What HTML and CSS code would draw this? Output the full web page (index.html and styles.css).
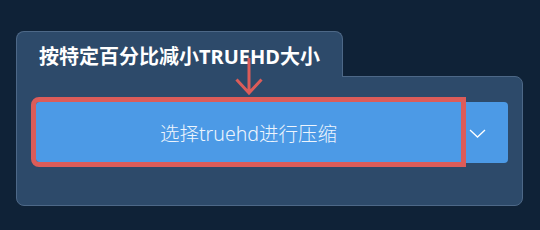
FILE: index.html
```html
<!DOCTYPE html>
<html lang="zh-CN">

<head>
    <meta charset="utf-8">
    <title>TRUEHD</title>
    <link rel="stylesheet" href="styles.css">
</head>

<body>
    <section class="panel">
        <div class="tab">
            <h2 class="title">按特定百分比减小TRUEHD大小</h2>
        </div>
        <div class="panel-body">
            <div class="split">
                <button type="button" class="split-main">选择truehd进行压缩</button>
                <button type="button" class="split-toggle">
                    <svg width="17" height="9" viewBox="0 0 17 9">
                        <path d="M1 1 L8.5 8 L16 1" fill="none" stroke="#fff" stroke-width="1.3"/>
                    </svg>
                </button>
            </div>
        </div>
        <!-- annotation arrow -->
        <svg class="arrow" width="28" height="37" viewBox="0 0 28 37">
            <path d="M14 0 V35 M1.5 21.5 L14 35 L26.5 21.5" fill="none" stroke="#dc5c59" stroke-width="3"/>
        </svg>
    </section>
</body>

</html>
```

FILE: styles.css
```css
html {
    background: #0f2237;
}

body {
    margin: 0;
    padding: 31px 0 0 16px;
    font-family: "Noto Sans", "Noto Sans CJK SC", sans-serif;
    color: #fff;
}

.panel {
    position: relative;
    width: 507px;
}

.tab {
    position: relative;
    z-index: 1;
    box-sizing: border-box;
    width: 327px;
    height: 46px;
    margin-bottom: -1px;
    padding: 12px 0 0 22px;
    background: #2d4a6a;
    border: 1px solid #4d6887;
    border-bottom: none;
    border-radius: 8px 8px 0 0;
}

.title {
    margin: 0;
    font-size: 20px;
    line-height: 26px;
    font-weight: 700;
    white-space: nowrap;
}

.panel-body {
    box-sizing: border-box;
    height: 130px;
    padding: 25px 0 0 19px;
    background: #2d4a6a;
    border: 1px solid #4d6887;
    border-radius: 0 8px 8px 8px;
}

.split {
    display: flex;
    height: 61px;
    width: 472px;
}

.split button {
    border: none;
    margin: 0;
    padding: 0;
    background: #4c9ae6;
    color: #eef5fd;
    font-family: inherit;
    cursor: pointer;
}

.split-main {
    position: relative;
    z-index: 1;
    width: 425px;
    height: 60px;
    font-size: 19.5px;
    font-weight: 300;
    border-radius: 3px 0 0 3px;
    outline: 5px solid #dc5c59;
}

.split-toggle {
    flex: 1;
    display: flex;
    align-items: center;
    padding-left: 8px !important;
    padding-top: 2px !important;
    border-radius: 0 4px 4px 0;
}

.split-toggle svg {
    display: block;
}

.arrow {
    position: absolute;
    z-index: 2;
    left: 219px;
    top: 27px;
}
```
